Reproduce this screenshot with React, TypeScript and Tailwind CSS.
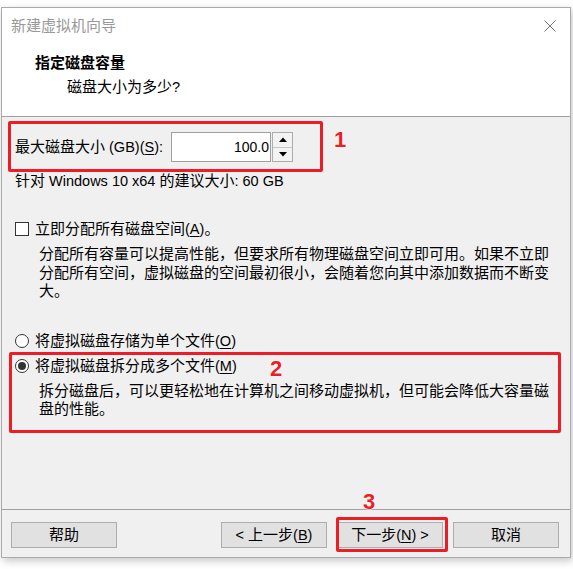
import React from "react";

const FONT = '"Liberation Sans", "Noto Sans CJK SC", sans-serif';

function L({ children }: { children: React.ReactNode }) {
  return <span className="text-[14.5px]">{children}</span>;
}

function Btn({ children }: { children: React.ReactNode }) {
  return (
    <div className="w-[106px] h-[26px] bg-[#e1e1e1] border border-[#adadad] flex items-center justify-center text-[15px] leading-[20px] text-black whitespace-pre">
      {children}
    </div>
  );
}

function Num({ n, className }: { n: string; className: string }) {
  return (
    <div
      className={
        "absolute text-[22px] font-bold leading-none text-[#ee1c25] [text-shadow:0_0_2px_#fff,0_0_2px_#fff,0_0_1px_#fff] " +
        className
      }
    >
      {n}
    </div>
  );
}

export default function App() {
  return (
    <div
      className="relative w-[573px] h-[569px] bg-white pt-[7px] pl-[1px] overflow-hidden"
      style={{ fontFamily: FONT }}
    >
      <div className="w-[570px] h-[551px] border border-[#aaaaaa] bg-[#f0f0f0] flex flex-col shadow-[2px_3px_8px_rgba(0,0,0,0.22)]">
        {/* header */}
        <div className="h-[109px] shrink-0 bg-white border-b border-[#a0a0a0] flex flex-col">
          <div className="mt-[8px] h-[20px] flex items-center justify-between pl-[9px] pr-[14px]">
            <span className="text-[15px] leading-[20px] text-[#999999]">新建虚拟机向导</span>
            <svg width="12" height="12" viewBox="0 0 12 12">
              <path d="M0.5 0.5 L11.5 11.5 M11.5 0.5 L0.5 11.5" stroke="#777" strokeWidth="1" fill="none" />
            </svg>
          </div>
          <div className="mt-[17px] pl-[33px] text-[15px] leading-[20px] font-bold text-black">指定磁盘容量</div>
          <div className="mt-[4px] pl-[65px] text-[15px] leading-[20px] text-black">
            磁盘大小为多少<L>?</L>
          </div>
        </div>

        {/* body */}
        <div className="flex-1 flex flex-col pl-[13px] text-[15px] text-black">
          <div className="mt-[15px] h-[30px] flex items-center">
            <div className="w-[156px] leading-[20px]">
              最大磁盘大小<L>
                {" (GB)("}
                <u className="underline-offset-2">S</u>
                {"):"}
              </L>
            </div>
            <div className="w-[100px] h-[30px] bg-white border border-[#a0a0a0] flex items-center justify-end pr-[1px]">
              <span className="text-[14px] leading-[20px]">100.0</span>
            </div>
            <div className="ml-[1px] w-[21px] h-[30px] border border-[#adadad] flex flex-col bg-[#f3f3f3]">
              <div className="flex-1 flex items-center justify-center border-b border-[#c8c8c8]">
                <svg width="8" height="5" viewBox="0 0 8 5">
                  <path d="M0 5 L4 0.5 L8 5 Z" fill="#000" />
                </svg>
              </div>
              <div className="flex-1 flex items-center justify-center">
                <svg width="8" height="5" viewBox="0 0 8 5">
                  <path d="M0 0 L4 4.5 L8 0 Z" fill="#000" />
                </svg>
              </div>
            </div>
          </div>

          <div className="mt-[9px] leading-[20px]">
            针对<L> Windows 10 x64 </L>的建议大小<L>: 60 GB</L>
          </div>

          <div className="mt-[28px] h-[20px] flex items-center">
            <div className="w-[14px] h-[14px] bg-white border border-[#333333]" />
            <span className="ml-[6px] leading-[20px]">
              立即分配所有磁盘空间<L>
                (<u className="underline-offset-2">A</u>)
              </L>
              。
            </span>
          </div>
          <div className="mt-[6px] pl-[24px] w-[540px] leading-[18.5px]">
            分配所有容量可以提高性能，但要求所有物理磁盘空间立即可用。如果不立即分配所有空间，虚拟磁盘的空间最初很小，会随着您向其中添加数据而不断变大。
          </div>

          <div className="mt-[30px] h-[20px] flex items-center">
            <div className="w-[14px] h-[14px] rounded-full bg-white border border-[#333333]" />
            <span className="ml-[6px] leading-[20px]">
              将虚拟磁盘存储为单个文件<L>
                (<u className="underline-offset-2">O</u>)
              </L>
            </span>
          </div>
          <div className="mt-[5px] h-[20px] flex items-center">
            <div className="w-[14px] h-[14px] rounded-full bg-white border border-[#333333] flex items-center justify-center">
              <div className="w-[8px] h-[8px] rounded-full bg-[#333333]" />
            </div>
            <span className="ml-[6px] leading-[20px]">
              将虚拟磁盘拆分成多个文件<L>
                (<u className="underline-offset-2">M</u>)
              </L>
            </span>
          </div>
          <div className="mt-[6px] pl-[24px] w-[540px] leading-[18.5px]">
            拆分磁盘后，可以更轻松地在计算机之间移动虚拟机，但可能会降低大容量磁盘的性能。
          </div>
        </div>

        {/* footer */}
        <div className="h-[48px] shrink-0 border-t border-[#a0a0a0] pt-[12px] pl-[9px] pr-[11px] flex items-start">
          <Btn>帮助</Btn>
          <div className="ml-auto flex gap-[10px]">
            <Btn>
              <L>{"<\u00a0"}</L>上一步<L>
                (<u className="underline-offset-2">B</u>)
              </L>
            </Btn>
            <Btn>
              下一步<L>
                (<u className="underline-offset-2">N</u>){"\u00a0>"}
              </L>
            </Btn>
            <Btn>取消</Btn>
          </div>
        </div>
      </div>

      {/* annotations */}
      <div className="absolute left-[8px] top-[121px] w-[315px] h-[51px] border-[3px] border-[#ee1c25] rounded-[2px]" />
      <Num n="1" className="left-[334px] top-[129px]" />
      <div className="absolute left-[9px] top-[352px] w-[552px] h-[81px] border-[3px] border-[#ee1c25] rounded-[2px]" />
      <Num n="2" className="left-[270px] top-[358px]" />
      <div className="absolute left-[336px] top-[517px] w-[112px] h-[35px] border-[3px] border-[#ee1c25] rounded-[2px]" />
      <Num n="3" className="left-[363px] top-[491px]" />
    </div>
  );
}
